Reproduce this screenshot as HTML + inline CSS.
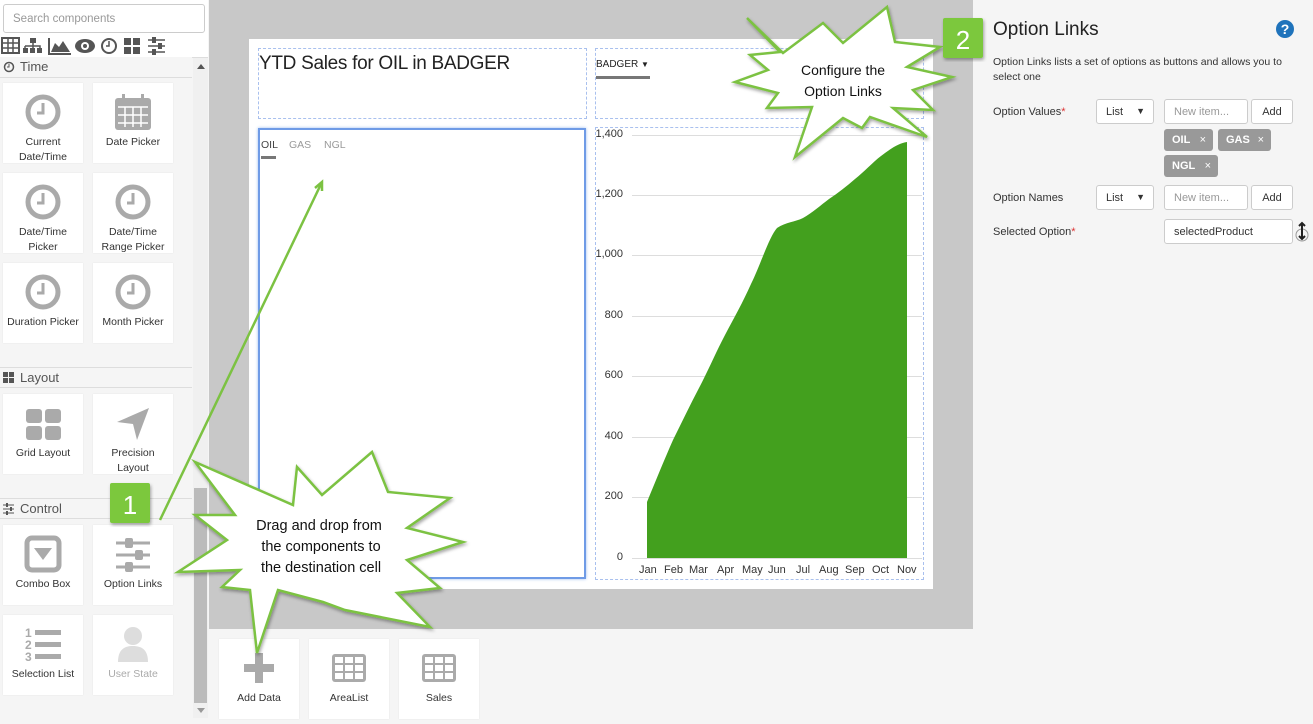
<!DOCTYPE html>
<html><head><meta charset="utf-8"><style>
*{box-sizing:border-box;margin:0;padding:0}
body{width:1313px;height:724px;overflow:hidden;position:relative;background:#f5f5f5;font-family:"Liberation Sans",sans-serif;font-size:11px;color:#333}
.a{position:absolute}
.tile{position:absolute;width:80px;height:80px;background:#fff;text-align:center;font-size:10.5px;color:#333;line-height:15px;box-shadow:0 0 1px #ddd}
.tile svg{display:block;margin:10px auto 4px}
.hdr{position:absolute;left:0;width:192px;height:21px;border-top:1px solid #ddd;border-bottom:1px solid #ddd;font-size:13px;color:#555;padding-left:20px;line-height:19px;background:#f5f5f5}
.sel{position:absolute;width:58px;height:25px;background:#fff;border:1px solid #ccc;border-radius:3px;padding:6px 9px;font-size:11px}
.inp{position:absolute;height:25px;background:#fff;border:1px solid #ccc;border-radius:3px;padding:6px 9px;font-size:11px;color:#999}
.btn{position:absolute;width:42px;height:25px;background:#fff;border:1px solid #ccc;border-radius:3px;padding:6px 0;text-align:center;font-size:11px}
.tag{position:absolute;height:22px;background:#999;color:#fff;border-radius:3px;font-size:11px;padding:5px 8px;font-weight:bold}
.lbl{position:absolute;left:993px;font-size:11px}
.gl{position:absolute;left:632px;width:290px;height:1px;background:#ddd}
.yl{position:absolute;width:30px;left:593px;text-align:right;font-size:11px}
</style></head><body>
<div class="a" style="left:0;top:0;width:208px;height:58px;background:#fff;border-bottom:1px solid #ddd"></div>
<div class="a" style="left:3px;top:4px;width:202px;height:29px;border:1px solid #ccc;border-radius:3px;background:#fff;padding:8px 9px;color:#999;font-size:11.5px">Search components</div>
<svg class="a" style="left:1px;top:37px" width="170" height="18" fill="#555">
<rect x="1" y="1" width="17" height="15" fill="none" stroke="#555" stroke-width="2"/><path d="M1 6h17M1 11h17M7 1v15M12 1v15" stroke="#555" stroke-width="1.5"/>
<rect x="29" y="1" width="6" height="5"/><rect x="22" y="11" width="5" height="5"/><rect x="29" y="11" width="5" height="5"/><rect x="36" y="11" width="5" height="5"/><path d="M32 6v5M24 9h15v3M24 9v3" stroke="#555" fill="none" stroke-width="1.5"/>
<path d="M48 1v16h22" stroke="#555" fill="none" stroke-width="2"/><path d="M50 15l4-9 4 4 4-6 7 11z"/>
<ellipse cx="84" cy="9" rx="10" ry="7"/><circle cx="84" cy="9" r="4" fill="#fff"/><circle cx="84" cy="9" r="2"/>
<circle cx="108" cy="9" r="7" fill="none" stroke="#555" stroke-width="2"/><path d="M108 4v5h-3" stroke="#555" fill="none" stroke-width="1.5"/>
<rect x="123" y="1" width="7" height="7"/><rect x="132" y="1" width="7" height="7"/><rect x="123" y="10" width="7" height="7"/><rect x="132" y="10" width="7" height="7"/>
<path d="M147 3h17M147 9h17M147 15h17" stroke="#555" stroke-width="1.5"/><rect x="151" y="0" width="4" height="6"/><rect x="157" y="6" width="4" height="6"/><rect x="151" y="12" width="4" height="6"/>
</svg>
<div class="hdr" style="top:57px;border-top:none">Time</div>
<svg class="a" style="left:3px;top:61px" width="12" height="12"><circle cx="6" cy="6" r="4.5" fill="none" stroke="#555" stroke-width="1.5"/><path d="M6 3v3h-2" stroke="#555" fill="none"/></svg>
<div class="a" style="left:193px;top:58px;width:15px;height:660px;background:#f0f0f0"></div>
<div class="a" style="left:197px;top:64px;border:4px solid transparent;border-bottom:5px solid #555;border-top:none"></div>
<div class="a" style="left:194px;top:488px;width:13px;height:215px;background:#bbb"></div>
<div class="a" style="left:197px;top:708px;border:4px solid transparent;border-top:5px solid #999;border-bottom:none"></div>

<div class="tile" style="left:3px;top:83px"><svg width="38" height="38"><circle cx="19" cy="19" r="15" fill="none" stroke="#aaa" stroke-width="5"/><path d="M19 10v10h-6" stroke="#aaa" fill="none" stroke-width="3"/></svg>Current<br>Date/Time</div>
<div class="tile" style="left:93px;top:83px"><svg width="40" height="38"><rect x="2" y="5" width="36" height="32" rx="3" fill="#aaa"/><rect x="9" y="1" width="3" height="8" fill="#aaa"/><rect x="28" y="1" width="3" height="8" fill="#aaa"/><path d="M5 14h30M5 22h30M5 30h30M12 14v20M20 14v20M28 14v20" stroke="#fff" stroke-width="1.5"/></svg>Date Picker</div>
<div class="tile" style="left:3px;top:173px"><svg width="38" height="38"><circle cx="19" cy="19" r="15" fill="none" stroke="#aaa" stroke-width="5"/><path d="M19 10v10h-6" stroke="#aaa" fill="none" stroke-width="3"/></svg>Date/Time<br>Picker</div>
<div class="tile" style="left:93px;top:173px"><svg width="38" height="38"><circle cx="19" cy="19" r="15" fill="none" stroke="#aaa" stroke-width="5"/><path d="M19 10v10h-6" stroke="#aaa" fill="none" stroke-width="3"/></svg>Date/Time<br>Range Picker</div>
<div class="tile" style="left:3px;top:263px"><svg width="38" height="38"><circle cx="19" cy="19" r="15" fill="none" stroke="#aaa" stroke-width="5"/><path d="M19 10v10h-6" stroke="#aaa" fill="none" stroke-width="3"/></svg>Duration Picker</div>
<div class="tile" style="left:93px;top:263px"><svg width="38" height="38"><circle cx="19" cy="19" r="15" fill="none" stroke="#aaa" stroke-width="5"/><path d="M19 10v10h-6" stroke="#aaa" fill="none" stroke-width="3"/></svg>Month Picker</div>

<div class="hdr" style="top:367px">Layout</div>
<svg class="a" style="left:3px;top:372px" width="12" height="12" fill="#555"><rect x="0" y="0" width="5" height="5"/><rect x="6" y="0" width="5" height="5"/><rect x="0" y="6" width="5" height="5"/><rect x="6" y="6" width="5" height="5"/></svg>
<div class="tile" style="left:3px;top:394px"><svg width="40" height="38"><rect x="3" y="5" width="16" height="14" rx="3" fill="#aaa"/><rect x="22" y="5" width="16" height="14" rx="3" fill="#aaa"/><rect x="3" y="22" width="16" height="14" rx="3" fill="#aaa"/><rect x="22" y="22" width="16" height="14" rx="3" fill="#aaa"/></svg>Grid Layout</div>
<div class="tile" style="left:93px;top:394px"><svg width="40" height="38"><path d="M36 4L4 18l16 2 4 16z" fill="#aaa"/></svg>Precision<br>Layout</div>

<div class="hdr" style="top:498px">Control</div>
<svg class="a" style="left:3px;top:503px" width="12" height="12"><path d="M0 2h11M0 6h11M0 10h11" stroke="#555"/><rect x="3" y="0" width="2" height="4" fill="#555"/><rect x="7" y="4" width="2" height="4" fill="#555"/><rect x="3" y="8" width="2" height="4" fill="#555"/></svg>
<div class="tile" style="left:3px;top:525px"><svg width="38" height="38"><rect x="3" y="3" width="32" height="32" rx="5" fill="none" stroke="#aaa" stroke-width="5"/><path d="M10 13h18l-9 12z" fill="#aaa"/></svg>Combo Box</div>
<div class="tile" style="left:93px;top:525px"><svg width="40" height="38"><path d="M3 8h34M3 20h34M3 32h34" stroke="#aaa" stroke-width="3"/><rect x="12" y="3" width="8" height="10" rx="2" fill="#aaa"/><rect x="22" y="15" width="8" height="10" rx="2" fill="#aaa"/><rect x="12" y="27" width="8" height="10" rx="2" fill="#aaa"/></svg>Option Links</div>
<div class="tile" style="left:3px;top:615px"><svg width="40" height="38" fill="#aaa"><text x="2" y="12" font-size="12" font-weight="bold" font-family="Liberation Sans">1</text><text x="2" y="24" font-size="12" font-weight="bold" font-family="Liberation Sans">2</text><text x="2" y="36" font-size="12" font-weight="bold" font-family="Liberation Sans">3</text><rect x="12" y="5" width="26" height="5"/><rect x="12" y="17" width="26" height="5"/><rect x="12" y="29" width="26" height="5"/></svg>Selection List</div>
<div class="tile" style="left:93px;top:615px;color:#aaa"><svg width="40" height="38" fill="#ddd"><circle cx="20" cy="11" r="9"/><path d="M5 37c0-12 6-16 15-16s15 4 15 16z"/></svg>User State</div>

<div class="a" style="left:209px;top:0;width:764px;height:629px;background:#c8c8c8"></div>
<div class="a" style="left:249px;top:39px;width:684px;height:550px;background:#fff"></div>
<div class="a" style="left:258px;top:48px;width:329px;height:71px;border:1px dashed #a9c0ee"></div>
<div class="a" style="left:595px;top:48px;width:329px;height:71px;border:1px dashed #a9c0ee"></div>
<div class="a" style="left:595px;top:127px;width:329px;height:453px;border:1px dashed #a9c0ee"></div>
<div class="a" style="left:258px;top:128px;width:328px;height:451px;border:2px solid #6f9be6;box-shadow:0 0 3px #9bbcf0"></div>
<div class="a" style="left:259px;top:53px;font-size:19px;color:#222;letter-spacing:-0.3px">YTD Sales for OIL in BADGER</div>
<div class="a" style="left:596px;top:59px;font-size:10px;color:#222">BADGER <span style="font-size:8px">▼</span></div>
<div class="a" style="left:596px;top:76px;width:54px;height:3px;background:#777"></div>
<div class="a" style="left:261px;top:139px;font-size:10.5px;color:#444">OIL</div>
<div class="a" style="left:289px;top:139px;font-size:10.5px;color:#999">GAS</div>
<div class="a" style="left:324px;top:139px;font-size:10.5px;color:#999">NGL</div>
<div class="a" style="left:261px;top:156px;width:15px;height:3px;background:#777"></div>

<div class="gl" style="top:135px"></div><div class="gl" style="top:195px"></div><div class="gl" style="top:255px"></div><div class="gl" style="top:316px"></div><div class="gl" style="top:376px"></div><div class="gl" style="top:437px"></div><div class="gl" style="top:497px"></div><div class="gl" style="top:558px"></div>
<div class="yl" style="top:128px">1,400</div><div class="yl" style="top:188px">1,200</div><div class="yl" style="top:248px">1,000</div><div class="yl" style="top:309px">800</div><div class="yl" style="top:369px">600</div><div class="yl" style="top:430px">400</div><div class="yl" style="top:490px">200</div><div class="yl" style="top:551px">0</div>
<svg class="a" style="left:0;top:0" width="973" height="600"><path d="M647 558L647 502C656 480 665 458 673 440C682 422 690 405 699 388C708 371 716 352 725 335C734 318 743 302 751 284C760 266 769 237 777 228C786 222 795 222 803 218C812 213 821 205 829 199C838 193 847 186 855 179C864 172 873 162 881 156C890 149 899 143 907 142L907 558Z" fill="#43a01e"/></svg>
<div class="a" style="left:632px;top:564px;width:290px;font-size:11px;color:#333">
<span class="a" style="left:7px">Jan</span><span class="a" style="left:32px">Feb</span><span class="a" style="left:57px">Mar</span><span class="a" style="left:85px">Apr</span><span class="a" style="left:110px">May</span><span class="a" style="left:136px">Jun</span><span class="a" style="left:164px">Jul</span><span class="a" style="left:187px">Aug</span><span class="a" style="left:213px">Sep</span><span class="a" style="left:240px">Oct</span><span class="a" style="left:265px">Nov</span></div>

<div class="tile" style="left:219px;top:639px"><svg width="40" height="38"><path d="M20 4v30M5 19h30" stroke="#aaa" stroke-width="8"/></svg>Add Data</div>
<div class="tile" style="left:309px;top:639px"><svg width="40" height="38"><rect x="3" y="5" width="34" height="28" rx="3" fill="#aaa"/><g fill="#fff"><rect x="6" y="8" width="8" height="6"/><rect x="16" y="8" width="8" height="6"/><rect x="26" y="8" width="8" height="6"/><rect x="6" y="16" width="8" height="6"/><rect x="16" y="16" width="8" height="6"/><rect x="26" y="16" width="8" height="6"/><rect x="6" y="24" width="8" height="6"/><rect x="16" y="24" width="8" height="6"/><rect x="26" y="24" width="8" height="6"/></g></svg>AreaList</div>
<div class="tile" style="left:399px;top:639px"><svg width="40" height="38"><rect x="3" y="5" width="34" height="28" rx="3" fill="#aaa"/><g fill="#fff"><rect x="6" y="8" width="8" height="6"/><rect x="16" y="8" width="8" height="6"/><rect x="26" y="8" width="8" height="6"/><rect x="6" y="16" width="8" height="6"/><rect x="16" y="16" width="8" height="6"/><rect x="26" y="16" width="8" height="6"/><rect x="6" y="24" width="8" height="6"/><rect x="16" y="24" width="8" height="6"/><rect x="26" y="24" width="8" height="6"/></g></svg>Sales</div>

<div class="a" style="left:993px;top:19px;font-size:19px;color:#222">Option Links</div>
<svg class="a" style="left:1275px;top:19px" width="20" height="20"><circle cx="10" cy="10" r="9" fill="#1f73bb"/><text x="10" y="15" text-anchor="middle" fill="#fff" font-size="14" font-weight="bold" font-family="Liberation Sans">?</text></svg>
<div class="a" style="left:993px;top:55px;width:310px;line-height:15px;font-size:10.5px">Option Links lists a set of options as buttons and allows you to select one</div>
<div class="lbl" style="top:106px">Option Values<span style="color:#d33">*</span></div>
<div class="sel" style="left:1096px;top:99px">List<span style="position:absolute;right:8px;font-size:9px">▼</span></div>
<div class="inp" style="left:1164px;top:99px;width:84px">New item...</div>
<div class="btn" style="left:1251px;top:99px">Add</div>
<div class="tag" style="left:1164px;top:129px;width:49px">OIL <span style="position:absolute;right:7px;font-weight:normal">×</span></div>
<div class="tag" style="left:1218px;top:129px;width:53px">GAS <span style="position:absolute;right:7px;font-weight:normal">×</span></div>
<div class="tag" style="left:1164px;top:155px;width:54px">NGL <span style="position:absolute;right:7px;font-weight:normal">×</span></div>
<div class="lbl" style="top:192px">Option Names</div>
<div class="sel" style="left:1096px;top:185px">List<span style="position:absolute;right:8px;font-size:9px">▼</span></div>
<div class="inp" style="left:1164px;top:185px;width:84px">New item...</div>
<div class="btn" style="left:1251px;top:185px">Add</div>
<div class="lbl" style="top:226px">Selected Option<span style="color:#d33">*</span></div>
<div class="inp" style="left:1164px;top:219px;width:129px;color:#333">selectedProduct</div>
<svg class="a" style="left:1295px;top:221px" width="14" height="22"><circle cx="7" cy="14" r="6" fill="none" stroke="#999"/><path d="M7 2v16M4 5l3-3 3 3M4 15l3 3 3-3" stroke="#222" stroke-width="2" fill="none"/></svg>

<svg class="a" style="left:0;top:0" width="1313" height="724">
<defs><filter id="sh"><feDropShadow dx="1" dy="2" stdDeviation="1.5" flood-opacity="0.35"/></filter></defs>
<path d="M160 520L322 182" stroke="#7cc242" stroke-width="2.5"/>
<path d="M315 188l7-6 0 9" stroke="#7cc242" stroke-width="2.5" fill="none"/>
<polygon filter="url(#sh)" fill="#fff" stroke="#7cc242" stroke-width="2.5" points="195,462 293,505 297,467 322,495 372,452 388,492 450,498 407,528 463,542 407,560 440,588 397,593 430,627 345,610 323,602 278,590 257,653 250,590 222,587 240,570 178,572 227,540 195,515 235,515"/>
<polygon filter="url(#sh)" fill="#fff" stroke="#7cc242" stroke-width="2.5" points="747,18 783,53 823,23 843,43 887,7 895,42 940,47 907,67 952,77 913,90 933,110 893,108 927,137 870,117 862,128 843,118 795,157 812,107 767,108 778,93 735,82 768,70 750,55 780,52"/>
<text x="319" y="530" text-anchor="middle" font-size="14.5" fill="#111" font-family="Liberation Sans">Drag and drop from</text>
<text x="321" y="551" text-anchor="middle" font-size="14.5" fill="#111" font-family="Liberation Sans">the components to</text>
<text x="321" y="572" text-anchor="middle" font-size="14.5" fill="#111" font-family="Liberation Sans">the destination cell</text>
<text x="843" y="75" text-anchor="middle" font-size="14" fill="#111" font-family="Liberation Sans">Configure the</text>
<text x="843" y="96" text-anchor="middle" font-size="14" fill="#111" font-family="Liberation Sans">Option Links</text>
<rect x="110" y="483" width="40" height="40" rx="2" fill="#7cc83c" filter="url(#sh)"/>
<text x="130" y="514" text-anchor="middle" font-size="26" fill="#fff" font-family="Liberation Sans">1</text>
<rect x="943" y="18" width="40" height="40" rx="2" fill="#7cc83c" filter="url(#sh)"/>
<text x="963" y="49" text-anchor="middle" font-size="26" fill="#fff" font-family="Liberation Sans">2</text>
</svg>
</body></html>
